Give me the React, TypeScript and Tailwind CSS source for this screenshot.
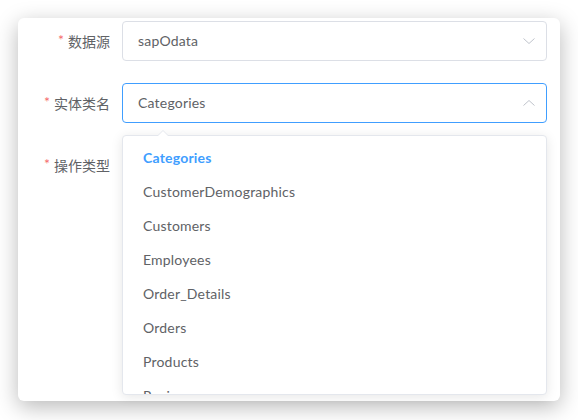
import React from "react";

const items = [
  "Categories",
  "CustomerDemographics",
  "Customers",
  "Employees",
  "Order_Details",
  "Orders",
  "Products",
  "Regions",
];

function Chevron({ up }: { up?: boolean }) {
  return (
    <svg width="14" height="8" viewBox="0 0 14 8" className="shrink-0">
      <polyline
        points={up ? "1.5,6.5 7,1.5 12.5,6.5" : "1.5,1.5 7,6.5 12.5,1.5"}
        fill="none"
        stroke="#c0c4cc"
        strokeWidth="1"
      />
    </svg>
  );
}

function Label({ text }: { text: string }) {
  return (
    <div className="w-[104px] shrink-0 pr-3 flex items-center justify-end h-10 text-[14px] text-[#606266]">
      <span className="text-[#f56c6c] mr-1 text-[14px] leading-none -mt-[2px]">*</span>
      <span>{text}</span>
    </div>
  );
}

export default function App() {
  return (
    <div
      className="w-[578px] h-[420px] bg-white overflow-hidden pt-[18px] pl-[18px]"
      style={{ fontFamily: '"Lato", "Noto Sans CJK SC", sans-serif' }}
    >
      <div className="relative w-[542px] h-[383px] bg-white rounded-[6px] shadow-[0_6px_22px_rgba(0,0,0,0.28)] pt-[3px] pr-[13px]">
        <div className="flex flex-col gap-[22px]">
          <div className="flex">
            <Label text="数据源" />
            <div className="flex-1 h-10 border border-[#dcdfe6] rounded-[4px] flex items-center justify-between pl-[15px] pr-[10px] text-[14px] text-[#606266] tracking-[0.2px]">
              <span className="-mt-[1px]">sapOdata</span>
              <Chevron />
            </div>
          </div>
          <div className="flex">
            <Label text="实体类名" />
            <div className="flex-1 h-10 border border-[#409eff] rounded-[4px] flex items-center justify-between pl-[15px] pr-[10px] text-[14px] text-[#606266] tracking-[0.2px]">
              <span className="-mt-[1px]">Categories</span>
              <Chevron up />
            </div>
          </div>
          <div className="flex">
            <Label text="操作类型" />
          </div>
        </div>

        <div className="absolute left-[104px] top-[117px] w-[425px] h-[260px] bg-white border border-[#e4e7ed] rounded-[4px] shadow-[0_2px_12px_rgba(0,0,0,0.1)]">
          <div className="absolute -top-[6px] left-[34px] w-0 h-0 border-l-[6px] border-r-[6px] border-b-[6px] border-l-transparent border-r-transparent border-b-[#e4e7ed]" />
          <div className="absolute -top-[5px] left-[35px] w-0 h-0 border-l-[5px] border-r-[5px] border-b-[5px] border-l-transparent border-r-transparent border-b-white" />
          <div className="h-full overflow-hidden rounded-[4px] pt-[5px]">
            {items.map((it, i) => (
              <div
                key={it}
                className={
                  "h-[34px] leading-[34px] px-5 text-[14px] tracking-[0.2px] " +
                  (i === 0 ? "text-[#409eff] font-bold" : "text-[#606266]")
                }
              >
                {it}
              </div>
            ))}
          </div>
        </div>
      </div>
    </div>
  );
}
